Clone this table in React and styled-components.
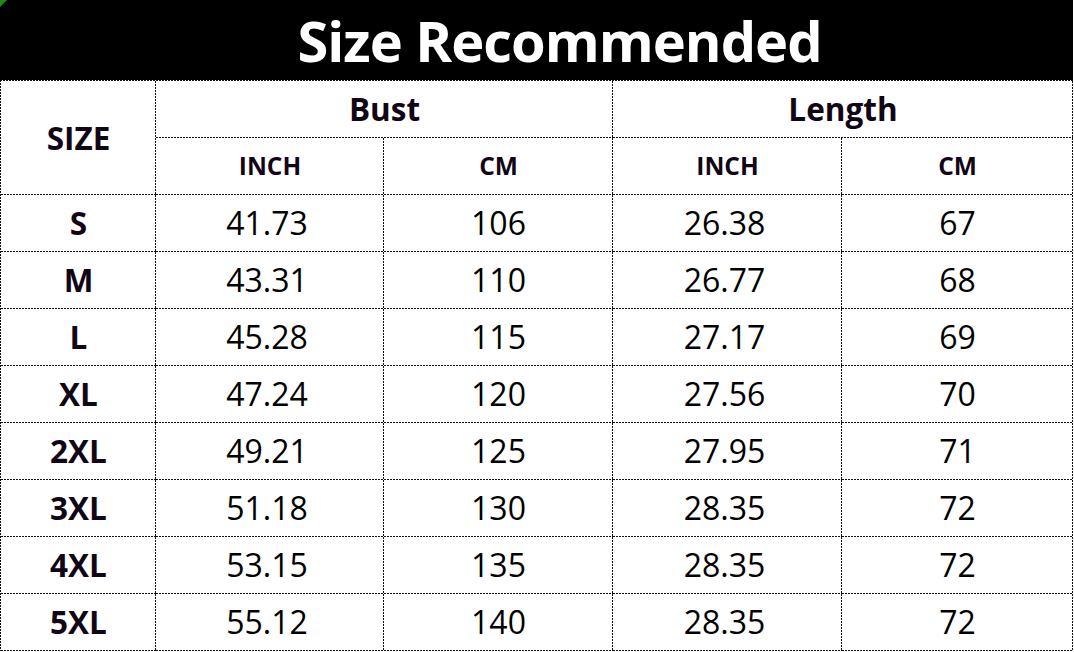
import React from "react";
import styled, { createGlobalStyle } from "styled-components";

const Global = createGlobalStyle`
  html, body { margin: 0; padding: 0; background: #fff; }
  body { font-family: "Open Sans", "Noto Sans", sans-serif; }
`;

const vLine = (pos) =>
  `repeating-linear-gradient(to bottom, #111 0 2px, transparent 2px 3px) ${pos} / 1px 100% no-repeat`;
const hLine = (pos) =>
  `repeating-linear-gradient(to right, #111 0 2px, transparent 2px 3px) ${pos} / 100% 1px no-repeat`;

const Page = styled.div`
  position: relative;
  width: 1074px;
`;

const Corner = styled.div`
  position: absolute;
  left: 0;
  top: 0;
  width: 0;
  height: 0;
  border-top: 7px solid #1a8a1a;
  border-right: 7px solid transparent;
`;

const TitleBar = styled.div`
  height: 80px;
  width: 1073px;
  background: #000;
  color: #fff;
  display: flex;
  align-items: center;
  justify-content: center;
  padding-left: 46px;
  box-sizing: border-box;
  font-weight: 700;
  font-size: 56px;
  letter-spacing: -1px;
`;

const Table = styled.div`
  display: grid;
  grid-template-columns: 155px 228px 229px 229px 231px;
  grid-auto-rows: 57px;
  width: 1073px;
  box-sizing: border-box;
  padding-left: 1px;
  padding-top: 1px;
  background: ${vLine("left top")}, ${hLine("left top")};
  color: #000;
`;

const Cell = styled.div`
  box-sizing: border-box;
  background: ${vLine("right top")}, ${hLine("left bottom")};
  display: flex;
  align-items: center;
  justify-content: center;
  font-size: ${(p) => (p.$sub ? "24.5px" : p.$bold ? "31.5px" : "32px")};
  font-weight: ${(p) => (p.$bold || p.$sub ? 700 : 400)};
  grid-column: ${(p) => p.$span || "auto"};
  grid-row: ${(p) => p.$rowSpan || "auto"};
  padding-bottom: 2px;
  padding-right: ${(p) => (p.$num ? "6px" : "0")};
  color: ${(p) => (p.$bold || p.$sub ? "#120616" : "#000")};
`;

const rows = [
  ["S", "41.73", "106", "26.38", "67"],
  ["M", "43.31", "110", "26.77", "68"],
  ["L", "45.28", "115", "27.17", "69"],
  ["XL", "47.24", "120", "27.56", "70"],
  ["2XL", "49.21", "125", "27.95", "71"],
  ["3XL", "51.18", "130", "28.35", "72"],
  ["4XL", "53.15", "135", "28.35", "72"],
  ["5XL", "55.12", "140", "28.35", "72"],
];

export default function App() {
  return (
    <>
      <Global />
      <Page>
        <TitleBar>Size Recommended</TitleBar>
        <Table>
          <Cell $bold $rowSpan="1 / span 2" $span="1">SIZE</Cell>
          <Cell $bold $span="2 / span 2">Bust</Cell>
          <Cell $bold $span="4 / span 2">Length</Cell>
          <Cell $sub>INCH</Cell>
          <Cell $sub>CM</Cell>
          <Cell $sub>INCH</Cell>
          <Cell $sub>CM</Cell>
          {rows.map((r) =>
            r.map((v, i) => (
              <Cell key={r[0] + i} $bold={i === 0} $num={i === 1 || i === 3}>
                {v}
              </Cell>
            ))
          )}
        </Table>
        <Corner />
      </Page>
    </>
  );
}
